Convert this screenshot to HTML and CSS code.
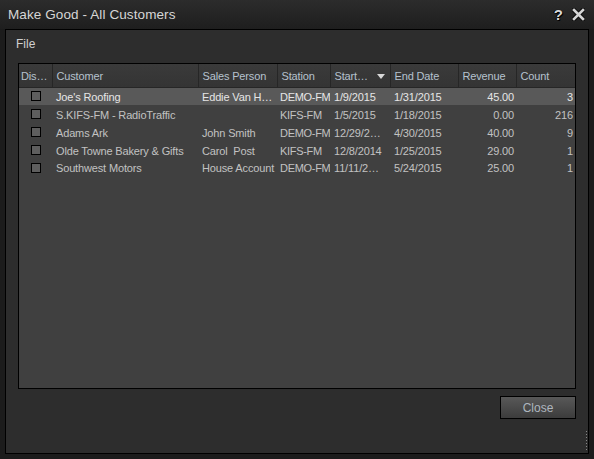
FILE: index.html
```html
<!DOCTYPE html>
<html>
<head>
<meta charset="utf-8">
<link rel="stylesheet" href="styles.css">
</head>
<body>
<div class="window">
  <div class="titlebar">
    <span class="title">Make Good - All Customers</span>
    <span class="tbtns">
      <span class="tbtn">?</span>
      <svg class="xicon" width="13" height="13" viewBox="0 0 13 13">
        <path d="M2 2 L11 11 M11 2 L2 11" stroke="#0a0a0a" stroke-width="4.5" stroke-linecap="square"/>
        <path d="M2 2 L11 11 M11 2 L2 11" stroke="#d4d4d4" stroke-width="2.6" stroke-linecap="square"/>
      </svg>
    </span>
  </div>
  <div class="panel">
    <div class="menu"><span class="menuitem">File</span></div>
    <div class="grid">
      <table>
        <colgroup>
          <col class="c1"><col class="c2"><col class="c3"><col class="c4"><col class="c5"><col class="c6"><col class="c7"><col class="c8">
        </colgroup>
        <thead>
          <tr>
            <th>Dis…</th><th>Customer</th><th>Sales Person</th><th>Station</th><th class="sort">Start… <span class="arrow"></span></th><th>End Date</th><th>Revenue</th><th>Count</th>
          </tr>
        </thead>
        <tbody>
          <tr class="sel"><td class="cb"><span class="box"></span></td><td>Joe's Roofing</td><td>Eddie Van H…</td><td class="st">DEMO-FM</td><td>1/9/2015</td><td>1/31/2015</td><td class="num">45.00</td><td class="num">3</td></tr>
          <tr><td class="cb"><span class="box"></span></td><td>S.KIFS-FM - RadioTraffic</td><td></td><td class="st">KIFS-FM</td><td>1/5/2015</td><td>1/18/2015</td><td class="num">0.00</td><td class="num">216</td></tr>
          <tr><td class="cb"><span class="box"></span></td><td>Adams Ark</td><td>John Smith</td><td class="st">DEMO-FM</td><td>12/29/2…</td><td>4/30/2015</td><td class="num">40.00</td><td class="num">9</td></tr>
          <tr><td class="cb"><span class="box"></span></td><td>Olde Towne Bakery &amp; Gifts</td><td>Carol&nbsp; Post</td><td class="st">KIFS-FM</td><td>12/8/2014</td><td>1/25/2015</td><td class="num">29.00</td><td class="num">1</td></tr>
          <tr><td class="cb"><span class="box"></span></td><td>Southwest Motors</td><td>House Account</td><td class="st">DEMO-FM</td><td>11/11/2…</td><td>5/24/2015</td><td class="num">25.00</td><td class="num">1</td></tr>
        </tbody>
      </table>
    </div>
    <div class="footer"><button class="btn">Close</button></div>
    <div class="grip"></div>
  </div>
</div>
</body>
</html>
```
FILE: styles.css
```css
html, body {
  margin: 0;
  padding: 0;
  background: #1b1b1b;
}
.window {
  width: 594px;
  height: 459px;
  display: flex;
  flex-direction: column;
  background: #1c1c1c;
  font-family: "Liberation Sans", Arial, sans-serif;
  box-sizing: border-box;
}
.titlebar {
  height: 29px;
  flex: none;
  display: flex;
  align-items: center;
  justify-content: space-between;
  padding: 0 8px 0 8px;
  background: linear-gradient(#2c2c2c, #1e1e1e);
}
.title {
  color: #d6d6d6;
  font-size: 13.5px;
  letter-spacing: 0.1px;
  padding-bottom: 1px;
}
.tbtns {
  display: flex;
  align-items: center;
  gap: 9px;
  margin-right: 1px;
}
.tbtn {
  color: #d8d8d8;
  font-weight: bold;
  font-size: 15px;
  text-shadow: 0 0 1px #000, 1px 1px 0 #000, -1px 0 0 #000;
}
.xicon {
  display: block;
}
.panel {
  flex: 1;
  margin: 0 5px 5px 5px;
  border: 1px solid #000;
  background: #2d2d2d;
  display: flex;
  flex-direction: column;
  position: relative;
}
.menu {
  height: 27px;
  flex: none;
  display: flex;
  align-items: center;
  padding-left: 10px;
}
.menuitem {
  color: #d0d0d0;
  font-size: 12px;
}
.grid {
  margin: 6px 12px 0 12px;
  height: 324px;
  border: 1px solid #000;
  background: #2d2d2d;
  flex: none;
}
table {
  border-collapse: collapse;
  table-layout: fixed;
  width: 556px;
  height: 100%;
  font-size: 11px;
  letter-spacing: -0.15px;
}
.c1 { width: 33px; }
.c2 { width: 146px; }
.c3 { width: 79px; }
.c4 { width: 53px; }
.c5 { width: 60px; }
.c6 { width: 68px; }
.c7 { width: 58px; }
.c8 { width: 59px; }
thead tr {
  height: 23px;
  background: linear-gradient(#3a3a3a, #343434);
}
th {
  font-weight: normal;
  text-align: left;
  color: #b6c2ce;
  padding: 1px 0 0 4px;
  border-right: 1px solid #262626;
  border-bottom: 1px solid #262626;
  white-space: nowrap;
  overflow: hidden;
}
th:first-child { padding-left: 2px; }
th:last-child { border-right: none; }
.arrow {
  display: inline-block;
  width: 0;
  height: 0;
  border-left: 4px solid transparent;
  border-right: 4px solid transparent;
  border-top: 5px solid #d8d8d8;
  margin-left: 6px;
  vertical-align: 1px;
}
tbody { background: #404040; }
tbody tr { height: 18px; }
tbody tr:last-child { height: auto; }
tbody tr:last-child td { vertical-align: top; padding-top: 3px; }
td {
  color: #c2c2c2;
  padding: 1px 0 0 4px;
  white-space: nowrap;
  overflow: hidden;
}
td.st { padding-left: 3px; letter-spacing: -0.3px; }
td.num { text-align: right; padding: 1px 2px 0 0; }
tr.sel { background: #595959; }
tr.sel td { color: #e6e6e6; }
td.cb { padding: 0; text-align: center; }
tbody tr:last-child td.cb { padding-top: 4px; }
.box {
  display: block;
  width: 8px;
  height: 8px;
  margin: 0 auto;
  border: 1px solid #000;
  background: #5e5e5e;
}
.footer {
  display: flex;
  justify-content: flex-end;
  padding: 7px 12px 0 0;
}
.btn {
  width: 76px;
  height: 23px;
  border: 1px solid #000;
  background: linear-gradient(#585858, #3c3c3c);
  color: #aeb6bf;
  font-family: "Liberation Sans", Arial, sans-serif;
  font-size: 12px;
  padding: 0;
}
.grip {
  position: absolute;
  right: 1px;
  bottom: 2px;
  width: 1px;
  height: 20px;
  background: repeating-linear-gradient(#888 0 1px, transparent 1px 3px);
}
```
